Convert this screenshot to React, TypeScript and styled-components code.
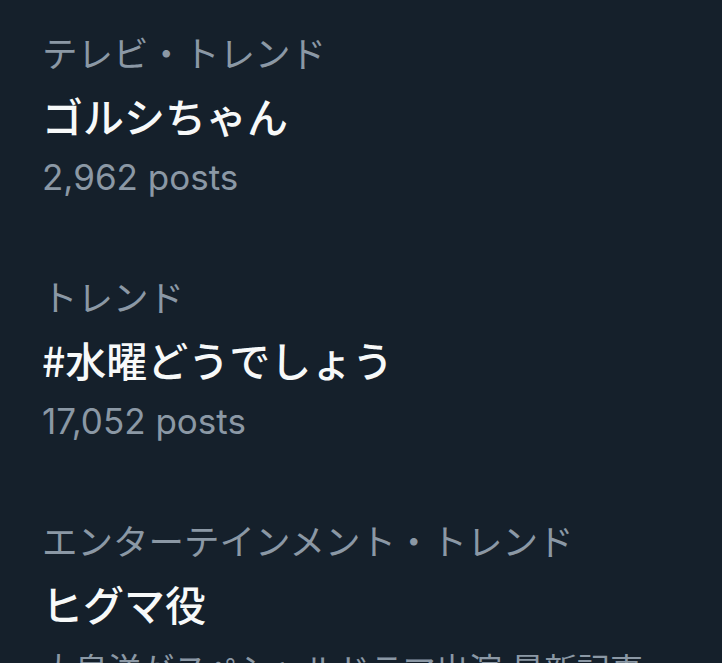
import React from 'react';
import styled, { createGlobalStyle } from 'styled-components';

const colors = {
  background: '#15202b',
  textPrimary: '#f7f9f9',
  textSecondary: '#8b98a5',
};

const GlobalStyle = createGlobalStyle`
  html, body {
    margin: 0;
    padding: 0;
    background: ${colors.background};
  }
  body {
    font-family: "Noto Sans CJK JP", "Noto Sans", sans-serif;
    -webkit-font-smoothing: antialiased;
  }
`;

const TrendList = styled.div`
  width: 100%;
  height: 663px;
  overflow: hidden;
  background: ${colors.background};
  display: flex;
  flex-direction: column;
`;

const TrendItem = styled.div`
  display: flex;
  flex-direction: column;
  padding: 24px 42px 42px;
  box-sizing: border-box;
`;

const Category = styled.div`
  color: ${colors.textSecondary};
  font-size: 35.5px;
  line-height: 56px;
  white-space: nowrap;
`;

const Title = styled.div`
  color: ${colors.textPrimary};
  font-size: 41px;
  font-weight: 500;
  line-height: 70px;
  white-space: nowrap;
`;

const Meta = styled.div<{ $description?: boolean }>`
  color: ${colors.textSecondary};
  font-family: Inter, "Noto Sans CJK JP", sans-serif;
  font-size: ${p => (p.$description ? '33px' : '35px')};
  line-height: 49px;
  padding-top: ${p => (p.$description ? '8px' : '3px')};
  white-space: nowrap;
`;

type Trend = {
  category: string;
  title: string;
  meta: string;
  description?: boolean;
};

const trends: Trend[] = [
  { category: 'テレビ・トレンド', title: 'ゴルシちゃん', meta: '2,962 posts' },
  { category: 'トレンド', title: '#水曜どうでしょう', meta: '17,052 posts' },
  {
    category: 'エンターテインメント・トレンド',
    title: 'ヒグマ役',
    meta: '大泉洋がスペシャルドラマ出演 最新記事',
    description: true,
  },
];

const App: React.FC = () => (
  <>
    <GlobalStyle />
    <TrendList>
      {trends.map(trend => (
        <TrendItem key={trend.title}>
          <Category>{trend.category}</Category>
          <Title>{trend.title}</Title>
          <Meta $description={trend.description}>{trend.meta}</Meta>
        </TrendItem>
      ))}
    </TrendList>
  </>
);

export default App;
